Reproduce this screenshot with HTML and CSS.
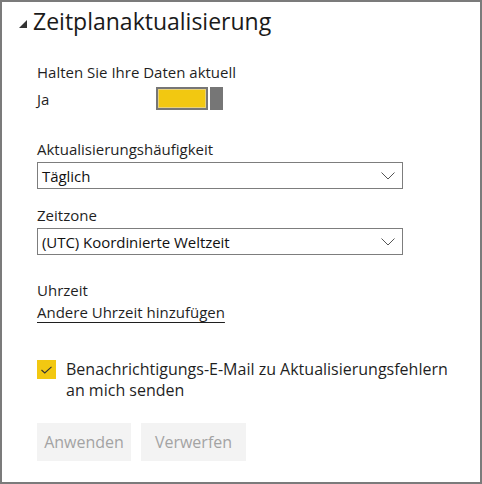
FILE: index.html
```html
<!DOCTYPE html>
<html lang="de">
<head>
<meta charset="utf-8">
<link rel="stylesheet" href="styles.css">
</head>
<body>
<div class="panel">
  <div class="header">
    <svg class="caret" width="8" height="8" viewBox="0 0 8 8"><polygon points="8,0 8,8 0,8" fill="#333"/></svg>
    <span class="title">Zeitplanaktualisierung</span>
  </div>
  <div class="content">
    <div class="label first">Halten Sie Ihre Daten aktuell</div>
    <div class="toggle-row">
      <span class="toggle-label">Ja</span>
      <span class="toggle">
        <span class="track"></span>
        <span class="thumb"></span>
      </span>
    </div>

    <div class="label freq">Aktualisierungshäufigkeit</div>
    <div class="select">
      <span class="select-text">Täglich</span>
      <svg class="chev" width="14" height="8" viewBox="0 0 14 8"><polyline points="0.5,0.5 7,7 13.5,0.5" fill="none" stroke="#555" stroke-width="1"/></svg>
    </div>

    <div class="label zone">Zeitzone</div>
    <div class="select">
      <span class="select-text">(UTC) Koordinierte Weltzeit</span>
      <svg class="chev" width="14" height="8" viewBox="0 0 14 8"><polyline points="0.5,0.5 7,7 13.5,0.5" fill="none" stroke="#555" stroke-width="1"/></svg>
    </div>

    <div class="label time">Uhrzeit</div>
    <a class="link" href="#">Andere Uhrzeit hinzufügen</a>

    <div class="check-row">
      <span class="checkbox">
        <svg width="11" height="8" viewBox="0 0 11 8"><polyline points="0.5,4 3.8,7 10.5,0.8" fill="none" stroke="#333" stroke-width="1.1"/></svg>
      </span>
      <span class="check-text">Benachrichtigungs-E-Mail zu Aktualisierungsfehlern an mich senden</span>
    </div>

    <div class="buttons">
      <button class="btn apply">Anwenden</button>
      <button class="btn discard">Verwerfen</button>
    </div>
  </div>
</div>
</body>
</html>
```

FILE: styles.css
```css
html, body {
  margin: 0;
  padding: 0;
  background: #ffffff;
}

body {
  font-family: "Open Sans", "Noto Sans", sans-serif;
  color: #1f1f1f;
}

.panel {
  box-sizing: border-box;
  width: 482px;
  height: 484px;
  border: 2px solid #7b7b7b;
  background: #ffffff;
}

.header {
  display: flex;
  align-items: center;
  height: 32px;
  margin-top: 3px;
  padding-left: 17px;
}

.caret {
  display: block;
  margin-top: 5px;
  margin-right: 6px;
}

.title {
  font-size: 23px;
  line-height: 30px;
  color: #1a1a1a;
}

.content {
  padding-left: 35px;
  padding-right: 12px;
}

.label {
  font-size: 15px;
  line-height: 20px;
  color: #1f1f1f;
}

.label.first {
  margin-top: 25px;
}

.toggle-row {
  display: flex;
  align-items: center;
  height: 23px;
  margin-top: 5px;
}

.toggle-label {
  font-size: 15px;
  width: 119px;
  line-height: 20px;
}

.toggle {
  display: flex;
  gap: 2px;
  height: 23px;
}

.track {
  box-sizing: border-box;
  width: 52px;
  height: 23px;
  background: #f2c811;
  border: 2px solid #767676;
  box-shadow: inset 0 0 0 1px #e8d27a;
}

.thumb {
  width: 13px;
  height: 23px;
  background: #767676;
}

.label.freq {
  margin-top: 29px;
}

.select {
  box-sizing: border-box;
  display: flex;
  align-items: center;
  justify-content: space-between;
  width: 366px;
  height: 27px;
  margin-top: 3px;
  padding: 0 7px 0 5px;
  border: 1px solid #7d7d7d;
}

.select-text {
  font-size: 15px;
  color: #111;
  letter-spacing: -0.05px;
  margin-left: -1px;
}

.chev {
  display: block;
}

.label.zone {
  margin-top: 16px;
}

.label.time {
  margin-top: 25px;
}

.link {
  display: inline-block;
  font-size: 15px;
  line-height: 20px;
  margin-top: 2px;
  color: #1f1f1f;
  text-decoration: underline;
  text-underline-offset: 4px;
}

.check-row {
  display: flex;
  align-items: flex-start;
  gap: 10px;
  margin-top: 36px;
}

.checkbox {
  box-sizing: border-box;
  flex: none;
  display: flex;
  align-items: center;
  justify-content: center;
  width: 19px;
  height: 19px;
  margin-top: 1px;
  background: #f2c811;
}

.check-text {
  font-size: 16px;
  line-height: 21px;
  color: #1f1f1f;
  max-width: 396px;
}

.buttons {
  display: flex;
  gap: 10px;
  margin-top: 22px;
}

.btn {
  height: 38px;
  border: none;
  background: #f3f3f3;
  color: #a3a3a3;
  font-family: "Open Sans", "Noto Sans", sans-serif;
  font-size: 16px;
  padding: 0;
}

.btn.apply {
  width: 94px;
}

.btn.discard {
  width: 105px;
}
```
